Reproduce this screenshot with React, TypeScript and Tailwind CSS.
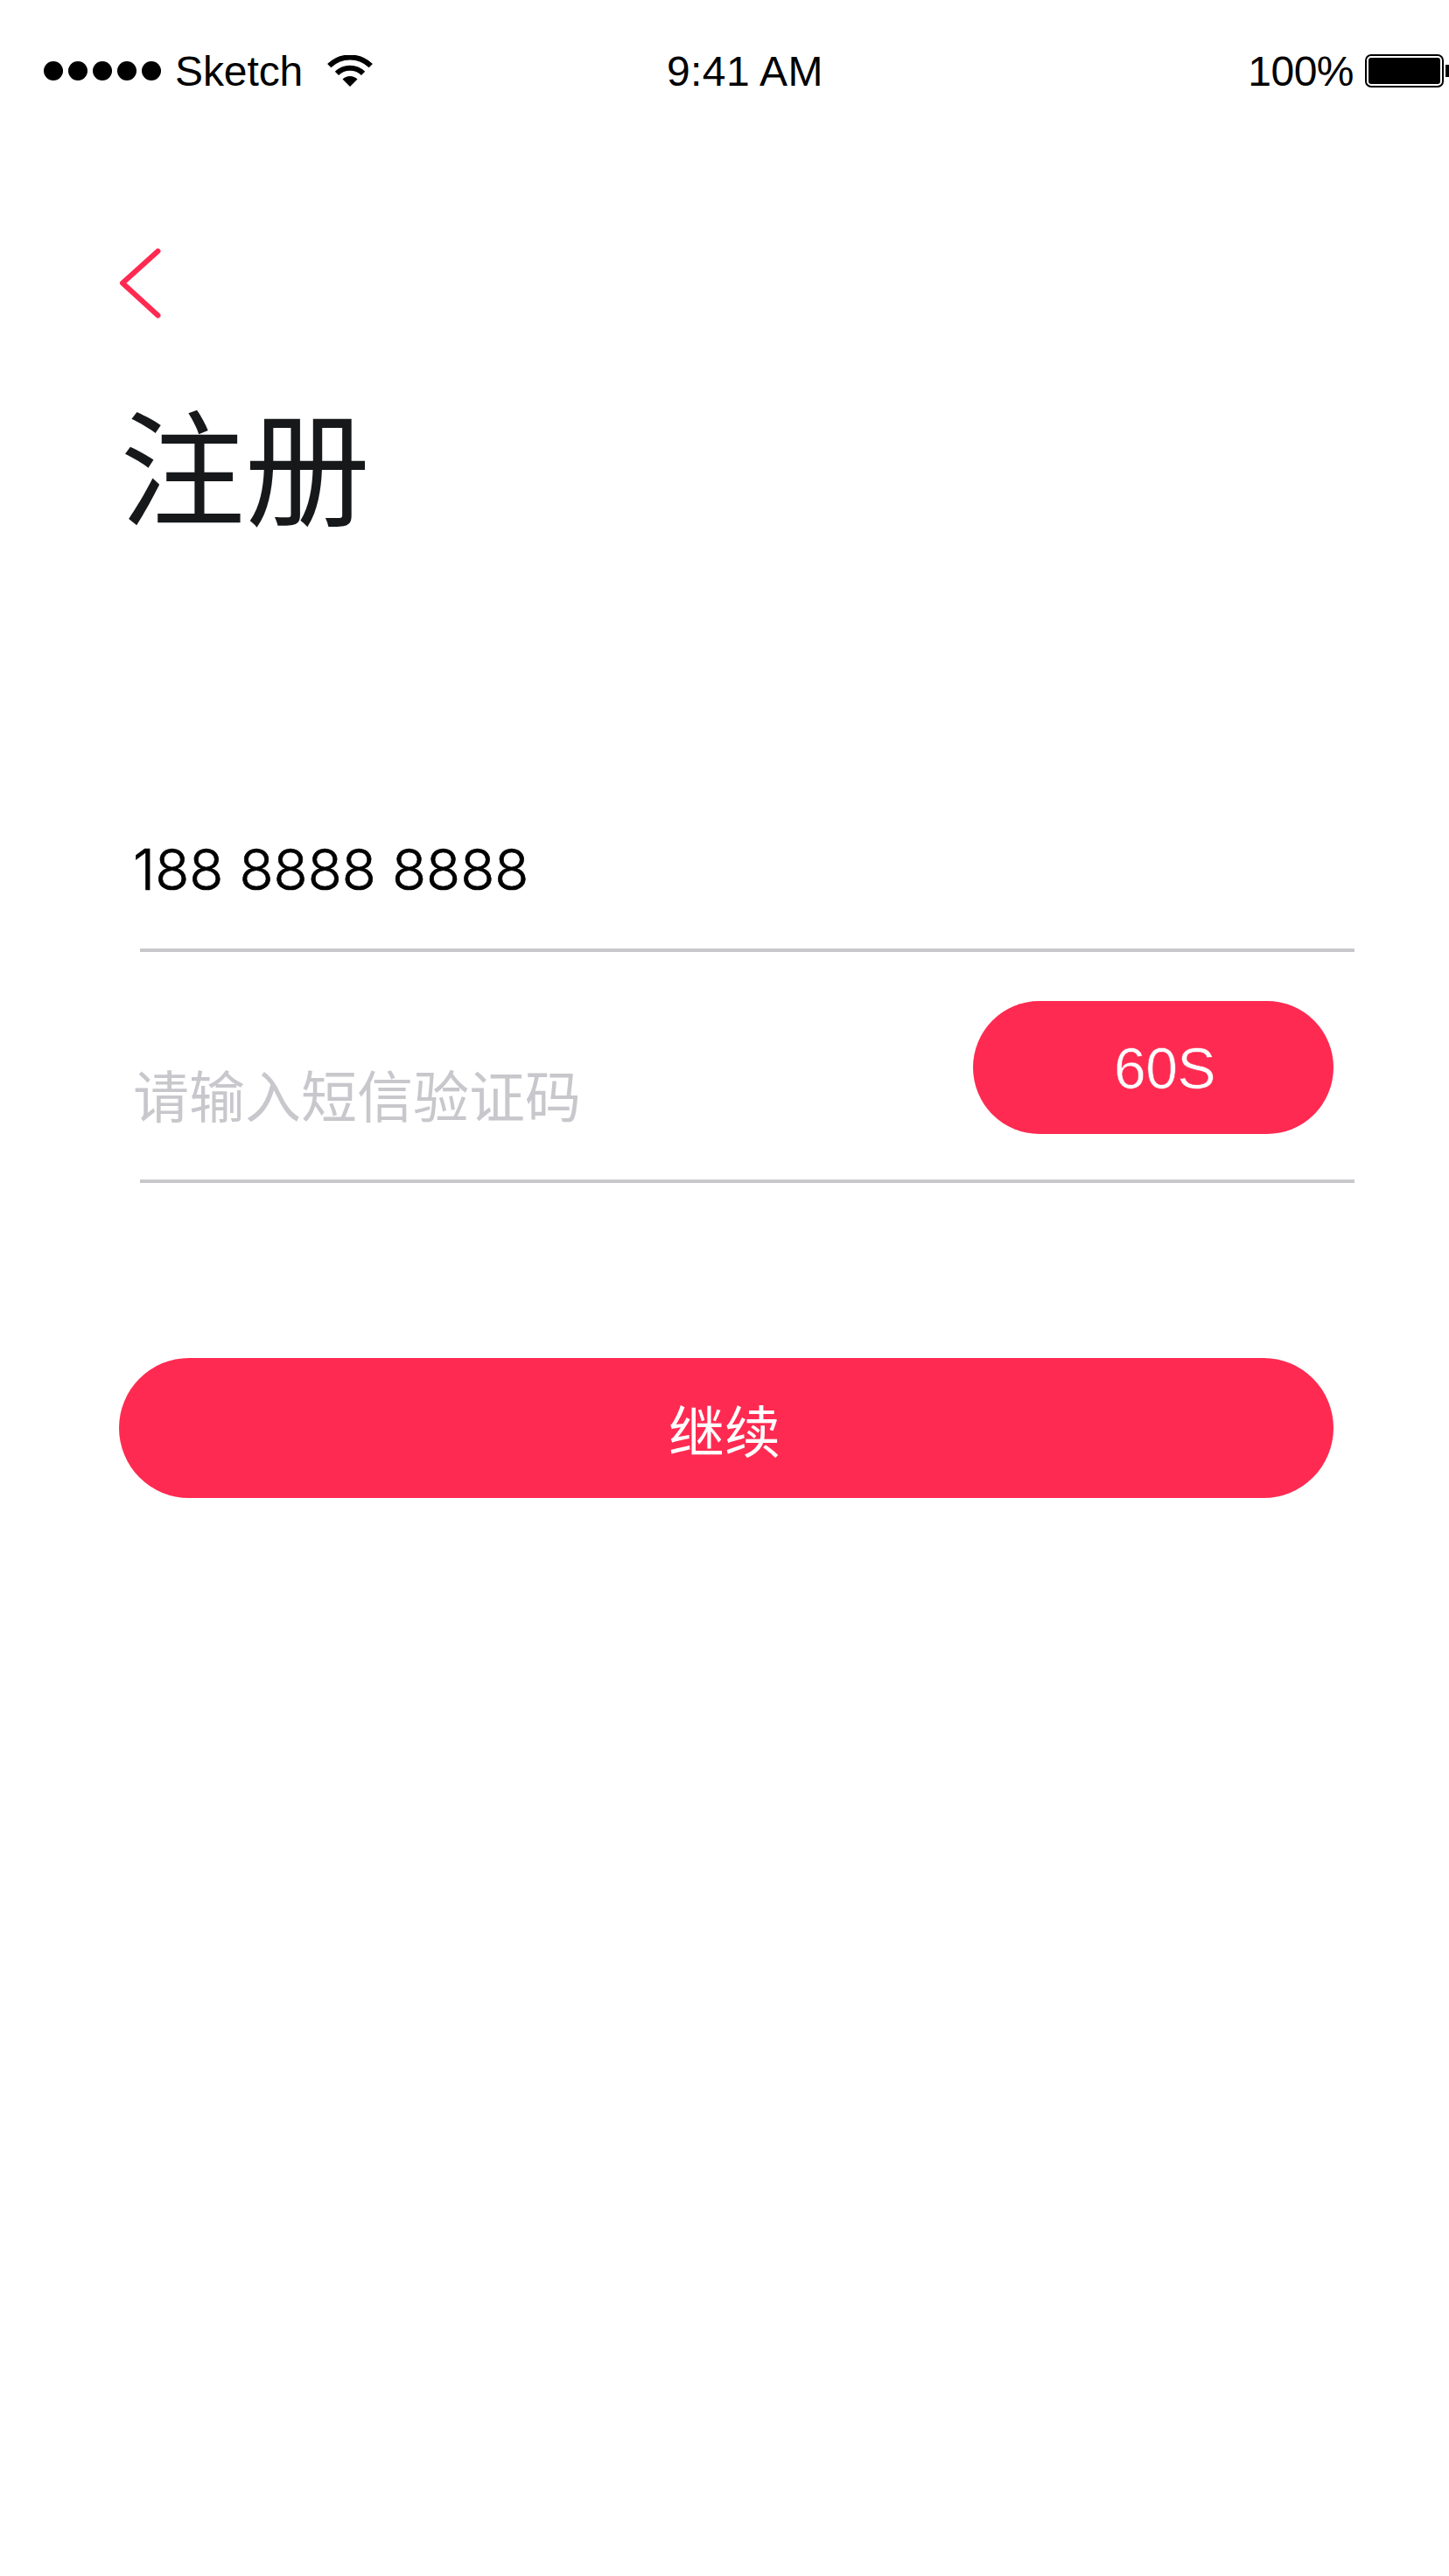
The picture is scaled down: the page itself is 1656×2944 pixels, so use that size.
const latin = "font-['Liberation_Sans',Arial,sans-serif]";

function StatusBar() {
  return (
    <header className={`grid h-40 grid-cols-3 pt-[55px] text-[48px] leading-[54px] text-black ${latin}`}>
      <div className="-mt-px flex h-[54px] items-center pl-[50px]">
        <div className="flex gap-[6px]">
          {[0, 1, 2, 3, 4].map((i) => (
            <span key={i} className="size-[22px] rounded-full bg-black" />
          ))}
        </div>
        <span className="mt-[2px] ml-[16px] tracking-[-0.1px]">Sketch</span>
        <svg className="ml-[28px] h-[36px] w-[52px]" viewBox="0 0 52 36" aria-hidden="true">
          <path d="M2.2 12.2A34 34 0 0 1 49.8 12.2" fill="none" stroke="#000" strokeWidth="6" />
          <path d="M10.9 20.9A21.5 21.5 0 0 1 41.1 20.9" fill="none" stroke="#000" strokeWidth="6" />
          <path d="M26 36 17.5 27.5A12 12 0 0 1 34.5 27.5Z" fill="#000" />
        </svg>
      </div>
      <div className="pl-[210px] tracking-[0.4px] whitespace-pre">9:41 AM</div>
      <div className="-mt-px flex h-[54px] items-center justify-end">
        <span className="mt-[2px] tracking-[-0.5px]">100%</span>
        <div className="ml-[13px] h-[38px] w-[90px] rounded-[7px] border-2 border-black p-[2px]">
          <div className="h-full rounded-[3px] bg-black" />
        </div>
        <span className="ml-[2px] h-[14px] w-[4px] bg-black" />
      </div>
    </header>
  );
}

export default function App() {
  return (
    <div className="h-[2944px] w-[1656px] overflow-hidden bg-white font-['Noto_Sans_CJK_SC',sans-serif]">
      <StatusBar />
      <main className="pl-[136px]">
        <button type="button" aria-label="返回" className="mt-[124px] block">
          <svg className="h-[80px] w-[48px]" viewBox="0 0 48 80" fill="none">
            <path d="M44.5 3 4 39.5 44.5 76.5" stroke="#ff2a51" strokeWidth="6" strokeLinecap="round" strokeLinejoin="round" />
          </svg>
        </button>
        <h1 className="mt-[60px] ml-px h-[220px] text-[143px] leading-[208px] font-normal text-[#16181a]">注册</h1>

        <div className="ml-[24px] flex h-[444px] w-[1388px] items-end border-b-4 border-[#c8c7cc]">
          <span className="mb-[42px] -ml-[8px] font-['Inter',sans-serif] text-[64px] leading-[96px] font-light text-black [-webkit-text-stroke:0.7px_#000]">
            188 8888 8888
          </span>
        </div>
        <div className="ml-[24px] flex h-[264px] w-[1388px] items-start justify-between border-b-4 border-[#c8c7cc]">
          <span className="mt-[113px] -ml-[8px] text-[64px] leading-[96px] text-[#c8c7cc]">
            请输入短信验证码
          </span>
          <button
            type="button"
            className={`mt-[56px] mr-[24px] h-[152px] w-[412px] rounded-[76px] bg-[#ff2a51] pl-[26px] text-[66px] leading-[154px] tracking-[-0.5px] text-white [-webkit-text-stroke:0.6px_#ff2a51] ${latin}`}
          >
            60S
          </button>
        </div>
        <button type="button" className="mt-[200px] block h-[160px] w-[1388px] rounded-[80px] bg-[#ff2a51] pt-px pr-[4px] text-[64px] leading-[159px] text-white">
          继续
        </button>
      </main>
    </div>
  );
}
